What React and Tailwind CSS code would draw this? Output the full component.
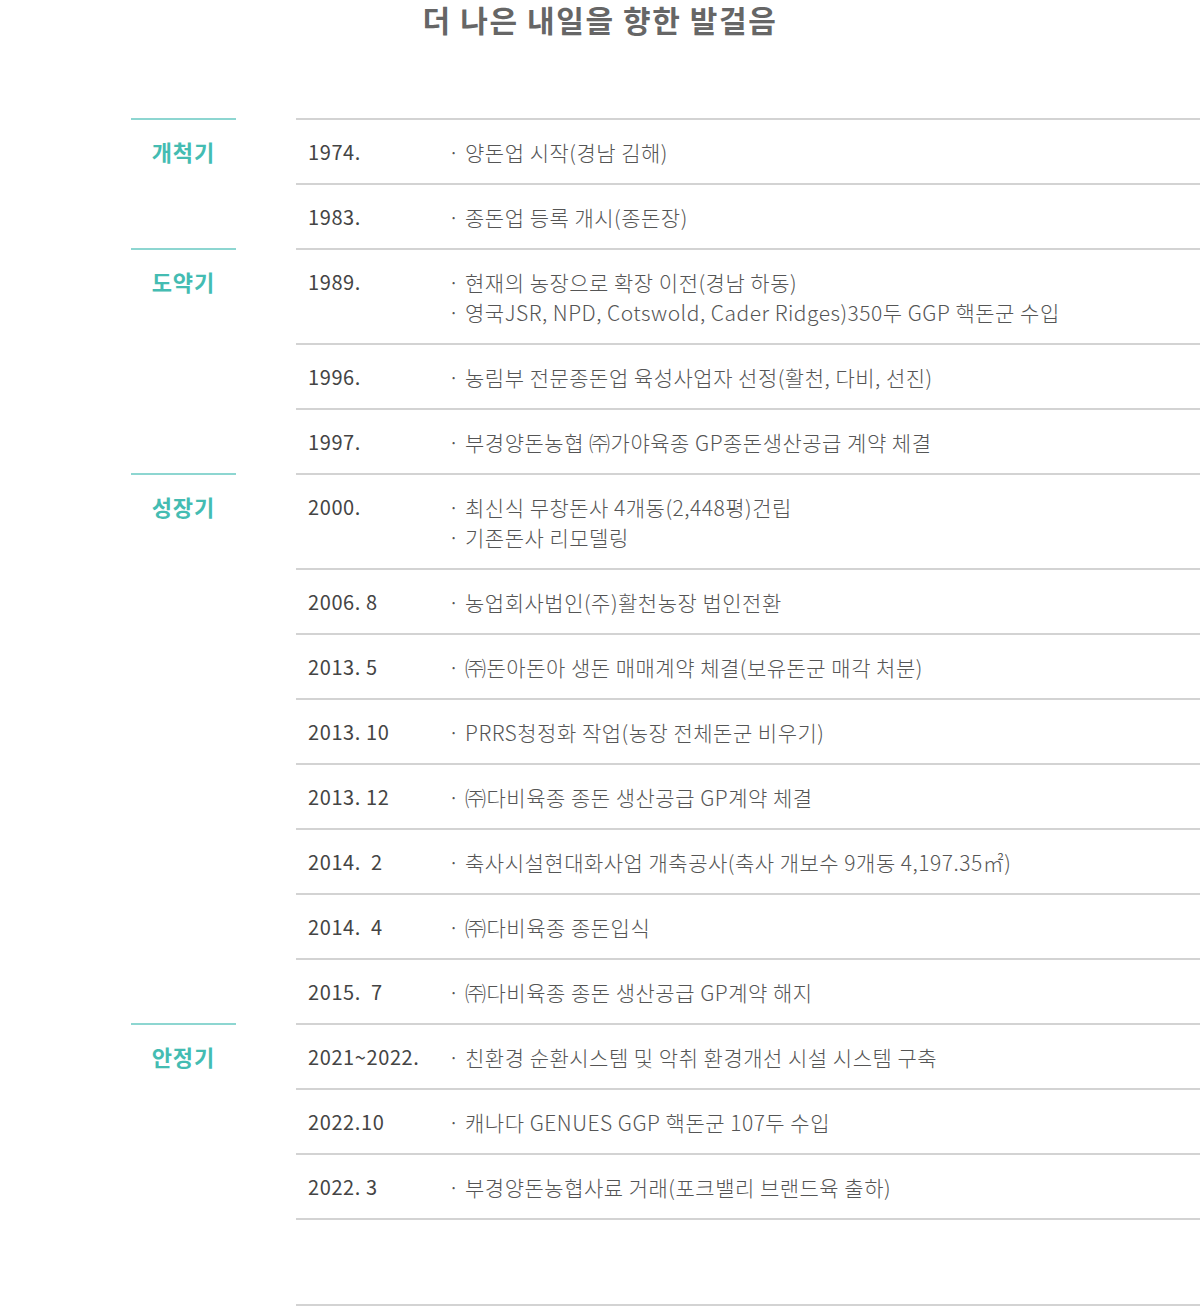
import React from "react";

const groups = [
  {
    label: "개척기",
    rows: [
      { year: "1974.", items: ["양돈업 시작(경남 김해)"] },
      { year: "1983.", items: ["종돈업 등록 개시(종돈장)"] },
    ],
  },
  {
    label: "도약기",
    rows: [
      {
        year: "1989.",
        items: [
          "현재의 농장으로 확장 이전(경남 하동)",
          "영국JSR, NPD, Cotswold, Cader Ridges)350두 GGP 핵돈군 수입",
        ],
      },
      { year: "1996.", items: ["농림부 전문종돈업 육성사업자 선정(활천, 다비, 선진)"] },
      { year: "1997.", items: ["부경양돈농협 ㈜가야육종 GP종돈생산공급 계약 체결"] },
    ],
  },
  {
    label: "성장기",
    rows: [
      { year: "2000.", items: ["최신식 무창돈사 4개동(2,448평)건립", "기존돈사 리모델링"] },
      { year: "2006. 8", items: ["농업회사법인(주)활천농장 법인전환"] },
      { year: "2013. 5", items: ["㈜돈아돈아 생돈 매매계약 체결(보유돈군 매각 처분)"] },
      { year: "2013. 10", items: ["PRRS청정화 작업(농장 전체돈군 비우기)"] },
      { year: "2013. 12", items: ["㈜다비육종 종돈 생산공급 GP계약 체결"] },
      { year: "2014.  2", items: ["축사시설현대화사업 개축공사(축사 개보수 9개동 4,197.35㎡)"] },
      { year: "2014.  4", items: ["㈜다비육종 종돈입식"] },
      { year: "2015.  7", items: ["㈜다비육종 종돈 생산공급 GP계약 해지"] },
    ],
  },
  {
    label: "안정기",
    rows: [
      { year: "2021~2022.", items: ["친환경 순환시스템 및 악취 환경개선 시설 시스템 구축"] },
      { year: "2022.10", items: ["캐나다 GENUES GGP 핵돈군 107두 수입"] },
      { year: "2022. 3", items: ["부경양돈농협사료 거래(포크밸리 브랜드육 출하)"] },
    ],
  },
];

const App = () => {
  return (
    <div
      className="w-[1200px] h-[1310px] bg-white overflow-hidden"
      style={{ fontFamily: '"Noto Sans CJK KR", "Noto Sans", sans-serif' }}
    >
      <h1 className="pt-[1px] text-center text-[30px] leading-[36px] font-bold text-[#666666] tracking-[1.6px]">
        더 나은 내일을 향한 발걸음
      </h1>

      <div className="mt-[81px]">
        {groups.map((g) => (
          <div key={g.label} className="flex">
            {/* LABEL */}
            <div className="ml-[131px] w-[105px] shrink-0 border-t-2 border-[#8dd6d1] py-[16px] text-center text-[22px] leading-[31px] font-bold tracking-[1px] text-[#44bcb2]">
              {g.label}
            </div>

            {/* ROWS */}
            <div className="ml-[60px] flex-1">
              {g.rows.map((r) => (
                <div
                  key={r.year}
                  className="flex border-t-2 border-[#d3d3d3] py-[16.5px] pl-[12px] text-[20px] leading-[30px]"
                >
                  <div className="w-[140px] shrink-0 whitespace-pre tracking-[0.6px] text-[#444444]">
                    {r.year}
                  </div>
                  <div className="font-light text-[21px] tracking-[0.5px] text-[#555555]">
                    {r.items.map((it) => (
                      <div key={it}>· {it}</div>
                    ))}
                  </div>
                </div>
              ))}
            </div>
          </div>
        ))}

        <div className="ml-[296px] h-[88px] border-t-2 border-b-2 border-[#d3d3d3]" />
      </div>
    </div>
  );
};

export default App;
